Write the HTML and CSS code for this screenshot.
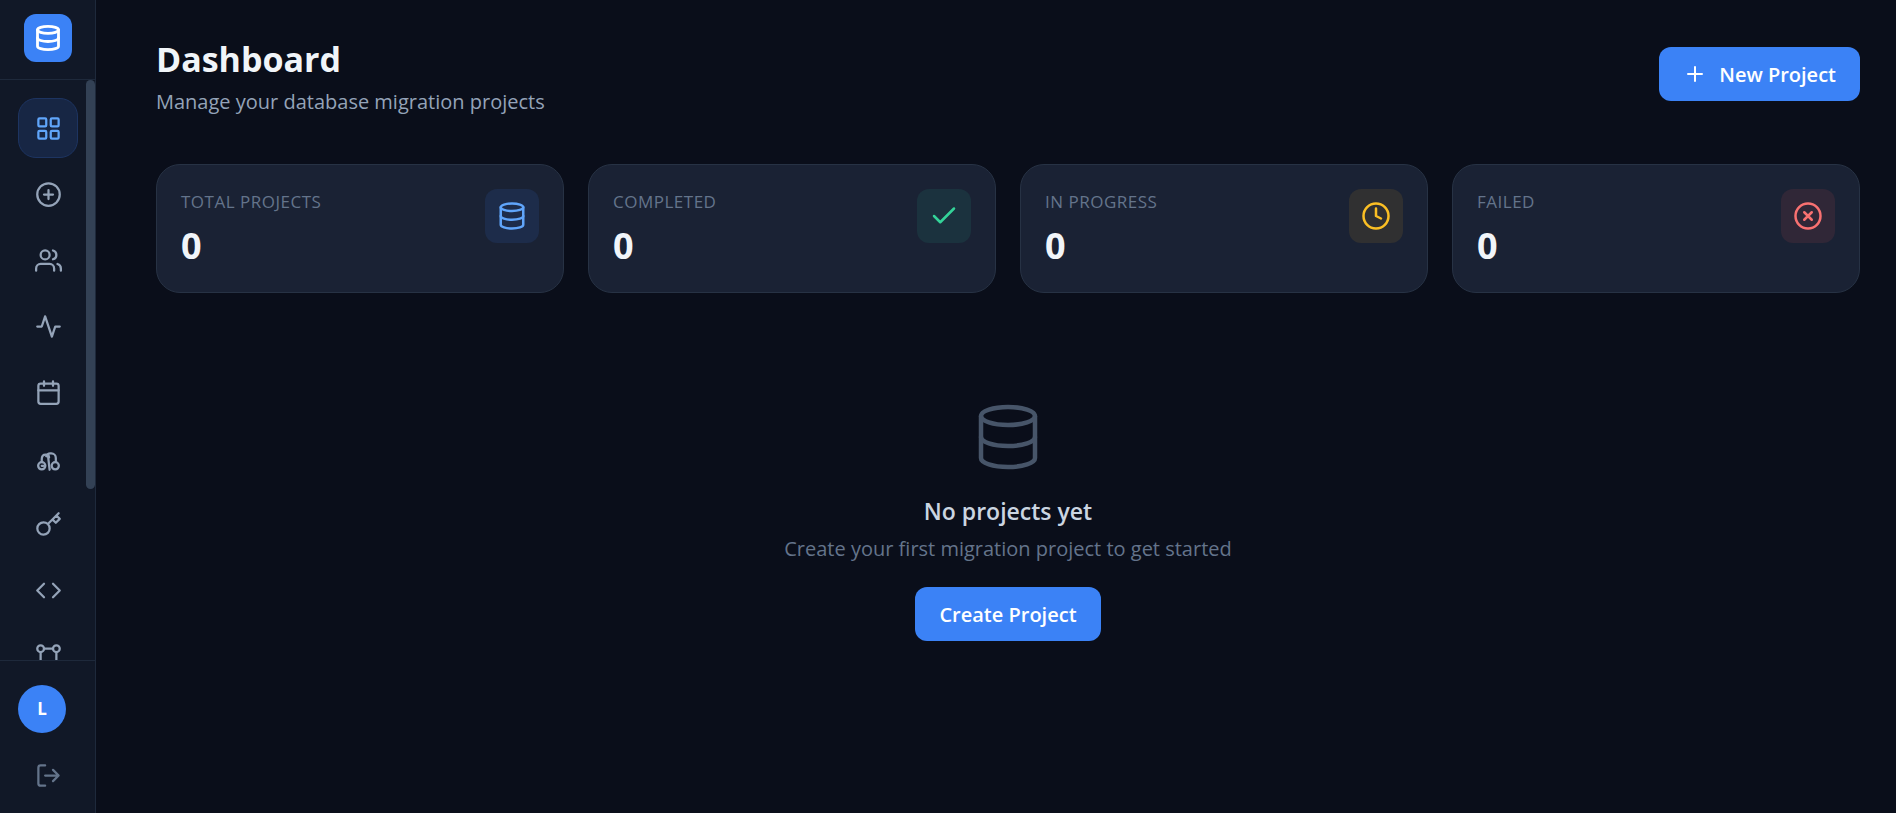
FILE: index.html
```html
<!DOCTYPE html>
<html lang="en">
<head>
  <meta charset="UTF-8">
  <meta name="viewport" content="width=device-width, initial-scale=1">
  <title>Dashboard</title>
  <link rel="stylesheet" href="styles.css">
</head>
<body>
  <div class="app">
    <aside class="sidebar">
      <div class="sidebar-header">
        <a class="logo" href="#" aria-label="Home">
          <svg viewBox="0 0 24 24"><ellipse cx="12" cy="5" rx="9" ry="3"/><path d="M21 12c0 1.66-4 3-9 3s-9-1.34-9-3"/><path d="M3 5v14c0 1.66 4 3 9 3s9-1.34 9-3V5"/></svg>
        </a>
      </div>

      <nav class="nav">
        <a class="nav-item active" href="#" aria-label="Dashboard">
          <svg viewBox="0 0 24 24"><rect x="3" y="3" width="7" height="7" rx="1"/><rect x="14" y="3" width="7" height="7" rx="1"/><rect x="3" y="14" width="7" height="7" rx="1"/><rect x="14" y="14" width="7" height="7" rx="1"/></svg>
        </a>
        <a class="nav-item" href="#" aria-label="New project">
          <svg viewBox="0 0 24 24"><circle cx="12" cy="12" r="10"/><path d="M12 8v8M8 12h8"/></svg>
        </a>
        <a class="nav-item" href="#" aria-label="Users">
          <svg viewBox="0 0 24 24"><path d="M17 21v-2a4 4 0 0 0-4-4H5a4 4 0 0 0-4 4v2"/><circle cx="9" cy="7" r="4"/><path d="M23 21v-2a4 4 0 0 0-3-3.87"/><path d="M16 3.13a4 4 0 0 1 0 7.75"/></svg>
        </a>
        <a class="nav-item" href="#" aria-label="Activity">
          <svg viewBox="0 0 24 24"><path d="M22 12h-4l-3 9L9 3l-3 9H2"/></svg>
        </a>
        <a class="nav-item" href="#" aria-label="Schedule">
          <svg viewBox="0 0 24 24"><rect x="3" y="4" width="18" height="18" rx="2"/><path d="M16 2v4M8 2v4M3 10h18"/></svg>
        </a>
        <a class="nav-item" href="#" aria-label="Compare">
          <svg viewBox="0 0 24 24"><circle cx="6" cy="18.5" r="3.2"/><circle cx="18" cy="18.5" r="3.2"/><path d="M6 15v-2.500C6 10 7.500 8.500 9.500 8.500S12.500 9.500 12.500 11"/><path d="M18.500 15v-3.500a4 4 0 0 0-4-4h-1A4 4 0 0 0 10 10"/><path d="M11.500 9L13 22M6 18.500h1.500"/></svg>
        </a>
        <a class="nav-item" href="#" aria-label="Keys">
          <svg viewBox="0 0 24 24"><path d="M21 2l-2 2m-7.61 7.61a5.5 5.5 0 1 1-7.778 7.778 5.5 5.5 0 0 1 7.777-7.777zm0 0L15.5 7.5m0 0l3 3L22 7l-3-3m-3.5 3.5L19 4"/></svg>
        </a>
        <a class="nav-item" href="#" aria-label="API">
          <svg viewBox="0 0 24 24"><path d="M16 18l6-6-6-6M8 6l-6 6 6 6"/></svg>
        </a>
        <a class="nav-item" href="#" aria-label="Workflows">
          <svg viewBox="0 0 24 24"><circle cx="5" cy="5" r="3"/><circle cx="19" cy="5" r="3"/><path d="M8 5h8M5 8v8M19 8v8"/><circle cx="5" cy="19" r="3"/><circle cx="19" cy="19" r="3"/></svg>
        </a>
        <span class="scroll-thumb"></span>
      </nav>

      <div class="sidebar-footer">
        <div class="avatar">L</div>
        <button class="logout" type="button" aria-label="Log out">
          <svg viewBox="0 0 24 24"><path d="M9 21H5a2 2 0 0 1-2-2V5a2 2 0 0 1 2-2h4"/><path d="M16 17l5-5-5-5M21 12H9"/></svg>
        </button>
      </div>
    </aside>

    <main class="main">
      <header class="page-header">
        <div>
          <h1>Dashboard</h1>
          <p>Manage your database migration projects</p>
        </div>
        <button class="btn" type="button">
          <svg viewBox="0 0 24 24"><path d="M12 5v14M5 12h14"/></svg>
          New Project
        </button>
      </header>

      <section class="stats">
        <div class="stat-card">
          <div>
            <div class="stat-label">Total Projects</div>
            <div class="stat-value">0</div>
          </div>
          <div class="stat-icon blue">
            <svg viewBox="0 0 24 24"><ellipse cx="12" cy="5" rx="9" ry="3"/><path d="M21 12c0 1.66-4 3-9 3s-9-1.34-9-3"/><path d="M3 5v14c0 1.66 4 3 9 3s9-1.34 9-3V5"/></svg>
          </div>
        </div>
        <div class="stat-card">
          <div>
            <div class="stat-label">Completed</div>
            <div class="stat-value">0</div>
          </div>
          <div class="stat-icon green">
            <svg viewBox="0 0 24 24"><path d="M20 6L9 17l-5-5"/></svg>
          </div>
        </div>
        <div class="stat-card">
          <div>
            <div class="stat-label">In Progress</div>
            <div class="stat-value">0</div>
          </div>
          <div class="stat-icon yellow">
            <svg viewBox="0 0 24 24"><circle cx="12" cy="12" r="10"/><path d="M12 6v6l4 2"/></svg>
          </div>
        </div>
        <div class="stat-card">
          <div>
            <div class="stat-label">Failed</div>
            <div class="stat-value">0</div>
          </div>
          <div class="stat-icon red">
            <svg viewBox="0 0 24 24"><circle cx="12" cy="12" r="10"/><path d="M15 9l-6 6M9 9l6 6"/></svg>
          </div>
        </div>
      </section>

      <section class="empty">
        <svg viewBox="0 0 24 24"><ellipse cx="12" cy="5" rx="9" ry="3"/><path d="M21 12c0 1.66-4 3-9 3s-9-1.34-9-3"/><path d="M3 5v14c0 1.66 4 3 9 3s9-1.34 9-3V5"/></svg>
        <h2>No projects yet</h2>
        <p>Create your first migration project to get started</p>
        <button class="btn" type="button">Create Project</button>
      </section>
    </main>
  </div>
</body>
</html>
```

FILE: styles.css
```css
* {
  box-sizing: border-box;
  margin: 0;
  padding: 0;
}

body {
  font-family: "Segoe UI", "Open Sans", sans-serif;
  background: #0a0e1a;
  color: #f1f5f9;
}

button { font-family: inherit; border: none; cursor: pointer; }

svg {
  fill: none;
  stroke: currentColor;
  stroke-width: 2;
  stroke-linecap: round;
  stroke-linejoin: round;
}

.app {
  display: flex;
  height: 100vh;
}

/* Sidebar */
.sidebar {
  display: flex;
  flex-direction: column;
  width: 96px;
  flex-shrink: 0;
  background: #111827;
  border-right: 1px solid #1e293b;
}
.sidebar-header {
  padding: 14px 24px 17px;
  border-bottom: 1px solid #1e293b;
}
.logo {
  display: flex;
  align-items: center;
  justify-content: center;
  width: 48px;
  height: 48px;
  border-radius: 12px;
  background: #3b82f6;
  color: #fff;
}
.logo svg { width: 28px; height: 28px; stroke-width: 2.4; }

.nav {
  position: relative;
  display: flex;
  flex-direction: column;
  gap: 6px;
  flex: 1;
  min-height: 0;
  padding: 18px;
  overflow: hidden;
}
.nav-item, .logout {
  display: flex;
  align-items: center;
  justify-content: center;
  flex-shrink: 0;
  width: 60px;
  height: 60px;
  border: 1px solid transparent;
  border-radius: 18px;
  color: #94a3b8;
}
.nav-item svg, .logout svg {
  width: 27px;
  height: 27px;
}
.nav-item.active {
  background: #172644;
  border-color: #1d3461;
  color: #60a5fa;
}
.scroll-thumb {
  position: absolute;
  top: 0;
  right: 0;
  width: 9px;
  height: 409px;
  border-radius: 5px;
  background: #334155;
}

.sidebar-footer {
  display: flex;
  flex-direction: column;
  gap: 12px;
  padding: 24px 18px 8px;
  border-top: 1px solid #1e293b;
}
.avatar {
  width: 48px;
  height: 48px;
  border-radius: 50%;
  background: #3b82f6;
  color: #fff;
  font-size: 17px;
  font-weight: 700;
  line-height: 48px;
  text-align: center;
}
.logout { background: none; color: #64748b; }

/* Main content */
.main {
  flex: 1;
  padding: 32px 36px 36px 60px;
}
.page-header {
  display: flex;
  align-items: center;
  justify-content: space-between;
  margin-bottom: 48px;
}
.page-header h1 {
  font-size: 34px;
  font-weight: 700;
  line-height: 54px;
  margin-bottom: 2px;
}
.page-header p {
  font-size: 20px;
  line-height: 28px;
  color: #94a3b8;
}
.btn {
  display: inline-flex;
  align-items: center;
  gap: 12px;
  height: 54px;
  padding: 0 24px;
  border-radius: 12px;
  background: #3b82f6;
  color: #fff;
  font-size: 20px;
  font-weight: 600;
}
.btn svg { width: 24px; height: 24px; }

.stats {
  display: grid;
  grid-template-columns: repeat(4, 1fr);
  gap: 24px;
}
.stat-card {
  display: flex;
  justify-content: space-between;
  align-items: flex-start;
  padding: 24px;
  background: #1a2234;
  border: 1px solid #273244;
  border-radius: 24px;
}
.stat-label {
  font-size: 17px;
  font-weight: 500;
  line-height: 26px;
  letter-spacing: 0.5px;
  text-transform: uppercase;
  color: #64748b;
}
.stat-value {
  margin-top: 9px;
  font-size: 36px;
  font-weight: 700;
  line-height: 44px;
}
.stat-icon {
  display: flex;
  align-items: center;
  justify-content: center;
  width: 54px;
  height: 54px;
  border-radius: 12px;
}
.stat-icon svg { width: 30px; height: 30px; }
.blue { background: #1d2c4a; color: #60a5fa; }
.green { background: #1b323e; color: #34d399; }
.yellow { background: #303031; color: #fbbf24; }
.red { background: #302737; color: #f87171; }

/* Empty state */
.empty {
  display: flex;
  flex-direction: column;
  align-items: center;
  padding: 108px 24px;
  text-align: center;
}
.empty svg {
  width: 72px;
  height: 72px;
  stroke-width: 1.5;
  color: #475569;
}
.empty h2 {
  margin-top: 20px;
  font-size: 23px;
  font-weight: 600;
  line-height: 36px;
  color: #cbd5e1;
}
.empty p {
  margin: 6px 0 24px;
  font-size: 20px;
  line-height: 28px;
  color: #64748b;
}
```
